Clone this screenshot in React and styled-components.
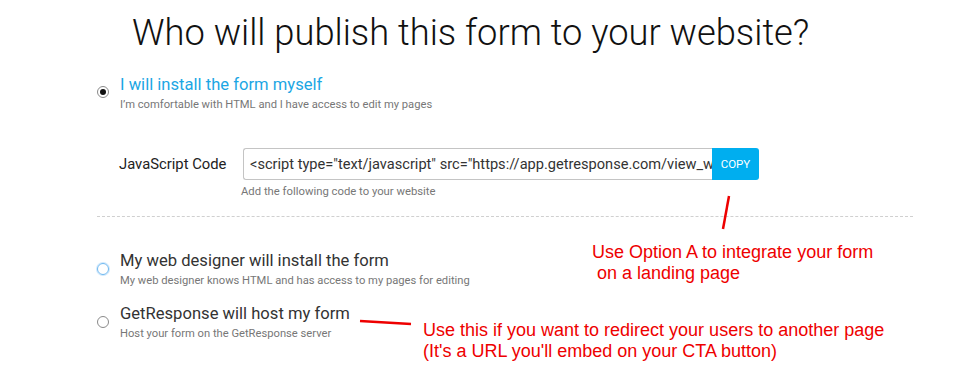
import React from "react";
import styled, { createGlobalStyle } from "styled-components";

const Global = createGlobalStyle`
  html, body { margin: 0; padding: 0; background: #fff; }
  body { font-family: Roboto, "Liberation Sans", Arial, sans-serif; }
`;

const Page = styled.div`
  position: relative;
  width: 973px;
  height: 375px;
  overflow: hidden;
  padding: 0 0 0 97px;
  box-sizing: border-box;
`;

const Title = styled.h1`
  margin: 0;
  padding: 11px 0 0 35px;
  font-family: Roboto, sans-serif;
  font-weight: 300;
  font-size: 36.3px;
  line-height: 44px;
  color: #111;
`;

const Section = styled.div`
  width: 816px;
`;

const Option = styled.div`
  display: flex;
  align-items: flex-start;
  gap: 11px;
  margin-top: ${(p) => p.$mt}px;
`;

const Radio = styled.span`
  flex: none;
  width: 12px;
  height: 12px;
  margin-top: ${(p) => p.$offset}px;
  box-sizing: border-box;
  border-radius: 50%;
  border: 1px solid ${(p) => (p.$focus ? "#6fb8f0" : "#8a8a8a")};
  box-shadow: ${(p) => (p.$focus ? "0 0 0 1px rgba(120,190,245,0.35)" : "none")};
  display: flex;
  align-items: center;
  justify-content: center;
  &::after {
    content: "";
    display: ${(p) => (p.$checked ? "block" : "none")};
    width: 6px;
    height: 6px;
    border-radius: 50%;
    background: #111;
  }
`;

const OptionText = styled.div`
  display: flex;
  flex-direction: column;
`;

const OptionTitle = styled.div`
  font-size: 16.6px;
  line-height: 20px;
  color: ${(p) => (p.$active ? "#1ba6e4" : "#333")};
`;

const OptionSub = styled.div`
  font-size: 11.2px;
  line-height: 14px;
  margin-top: 3px;
  color: #777;
`;

const CodeRow = styled.div`
  display: flex;
  align-items: center;
  margin: 36px 0 0 22px;
`;

const CodeLabel = styled.div`
  width: 124px;
  font-size: 14.8px;
  color: #222;
`;

const InputGroup = styled.div`
  display: flex;
  height: 32px;
`;

const CodeInput = styled.div`
  width: 469px;
  box-sizing: border-box;
  border: 1px solid #c4c4c4;
  border-right: none;
  border-radius: 3px 0 0 3px;
  padding: 0 6px;
  display: flex;
  align-items: center;
  font-size: 14.6px;
  color: #333;
  white-space: nowrap;
  overflow: hidden;
`;

const CopyButton = styled.button`
  flex: none;
  width: 47px;
  border: none;
  border-radius: 0 3px 3px 0;
  background: #00aeef;
  color: #fff;
  font-family: Roboto, sans-serif;
  font-size: 11.5px;
  padding: 0;
  cursor: pointer;
`;

const Hint = styled.div`
  margin: 5px 0 0 144px;
  font-size: 11.3px;
  line-height: 14px;
  color: #777;
`;

const Divider = styled.hr`
  margin: 17px 0 0 0;
  border: none;
  border-top: 1px dashed #d0d0d0;
  height: 0;
`;

const Note = styled.div`
  position: absolute;
  left: ${(p) => p.$x}px;
  top: ${(p) => p.$y}px;
  font-family: "Liberation Sans", Arial, sans-serif;
  font-size: 18px;
  line-height: 21px;
  color: #ee0000;
  white-space: pre;
`;

const Strokes = styled.svg`
  position: absolute;
  left: 0;
  top: 0;
  pointer-events: none;
`;

export default function App() {
  return (
    <>
      <Global />
      <Page>
        <Title>Who will publish this form to your website?</Title>
        <Section>
          <Option $mt={20}>
            <Radio $checked $offset={11} />
            <OptionText>
              <OptionTitle $active>I will install the form myself</OptionTitle>
              <OptionSub>I’m comfortable with HTML and I have access to edit my pages</OptionSub>
            </OptionText>
          </Option>
          <CodeRow>
            <CodeLabel>JavaScript Code</CodeLabel>
            <InputGroup>
              <CodeInput>
                &lt;script type="text/javascript" src="https://app.getresponse.com/view_w
              </CodeInput>
              <CopyButton>COPY</CopyButton>
            </InputGroup>
          </CodeRow>
          <Hint>Add the following code to your website</Hint>
          <Divider />
          <Option $mt={34}>
            <Radio $focus $offset={12} />
            <OptionText>
              <OptionTitle>My web designer will install the form</OptionTitle>
              <OptionSub>My web designer knows HTML and has access to my pages for editing</OptionSub>
            </OptionText>
          </Option>
          <Option $mt={16}>
            <Radio $offset={12} />
            <OptionText>
              <OptionTitle>GetResponse will host my form</OptionTitle>
              <OptionSub>Host your form on the GetResponse server</OptionSub>
            </OptionText>
          </Option>
        </Section>
        <Strokes width="973" height="375">
          <line x1="729" y1="196" x2="723" y2="229" stroke="#ee0000" strokeWidth="2.5" />
          <line x1="360" y1="321" x2="411" y2="324" stroke="#ee0000" strokeWidth="2.5" />
        </Strokes>
        <Note $x={592} $y={242}>{"Use Option A to integrate your form\n on a landing page"}</Note>
        <Note $x={423} $y={320}>{"Use this if you want to redirect your users to another page\n(It's a URL you'll embed on your CTA button)"}</Note>
      </Page>
    </>
  );
}
